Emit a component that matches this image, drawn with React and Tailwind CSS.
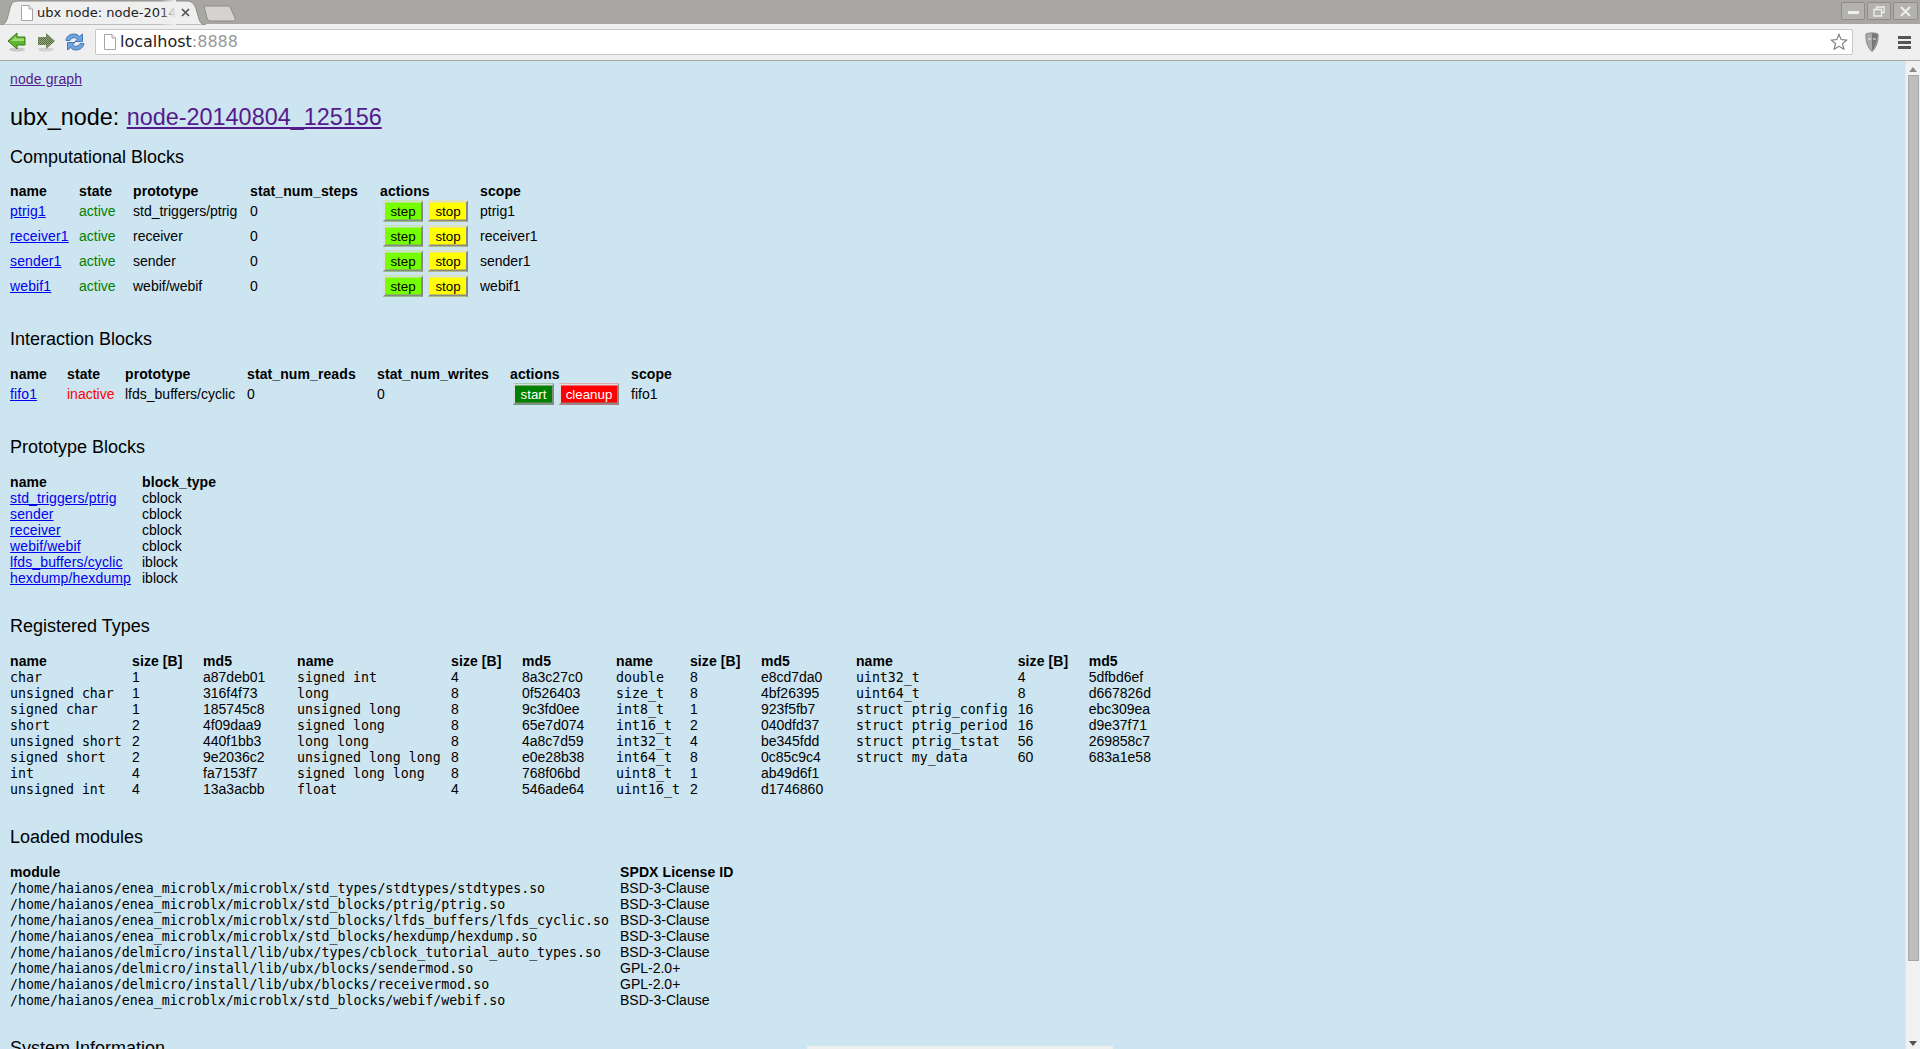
import React from "react";

const computational = [
  ["ptrig1", "std_triggers/ptrig", "0", "ptrig1"],
  ["receiver1", "receiver", "0", "receiver1"],
  ["sender1", "sender", "0", "sender1"],
  ["webif1", "webif/webif", "0", "webif1"],
];

const prototypes = [
  ["std_triggers/ptrig", "cblock"],
  ["sender", "cblock"],
  ["receiver", "cblock"],
  ["webif/webif", "cblock"],
  ["lfds_buffers/cyclic", "iblock"],
  ["hexdump/hexdump", "iblock"],
];

const typeTables = [
  {
    nameWidth: "w-[122px]",
    md5Width: "w-[74px]",
    rows: [
      ["char", "1", "a87deb01"],
      ["unsigned char", "1", "316f4f73"],
      ["signed char", "1", "185745c8"],
      ["short", "2", "4f09daa9"],
      ["unsigned short", "2", "440f1bb3"],
      ["signed short", "2", "9e2036c2"],
      ["int", "4", "fa7153f7"],
      ["unsigned int", "4", "13a3acbb"],
    ],
  },
  {
    nameWidth: "w-[154px]",
    md5Width: "w-[74px]",
    rows: [
      ["signed int", "4", "8a3c27c0"],
      ["long", "8", "0f526403"],
      ["unsigned long", "8", "9c3fd0ee"],
      ["signed long", "8", "65e7d074"],
      ["long long", "8", "4a8c7d59"],
      ["unsigned long long", "8", "e0e28b38"],
      ["signed long long", "8", "768f06bd"],
      ["float", "4", "546ade64"],
    ],
  },
  {
    nameWidth: "w-[73px]",
    md5Width: "w-[75px]",
    rows: [
      ["double", "8", "e8cd7da0"],
      ["size_t", "8", "4bf26395"],
      ["int8_t", "1", "923f5fb7"],
      ["int16_t", "2", "040dfd37"],
      ["int32_t", "4", "be345fdd"],
      ["int64_t", "8", "0c85c9c4"],
      ["uint8_t", "1", "ab49d6f1"],
      ["uint16_t", "2", "d1746860"],
    ],
  },
  {
    nameWidth: "w-[161px]",
    md5Width: "w-[74px]",
    rows: [
      ["uint32_t", "4", "5dfbd6ef"],
      ["uint64_t", "8", "d667826d"],
      ["struct ptrig_config", "16", "ebc309ea"],
      ["struct ptrig_period", "16", "d9e37f71"],
      ["struct ptrig_tstat", "56", "269858c7"],
      ["struct my_data", "60", "683a1e58"],
    ],
  },
];

const modules = [
  ["/home/haianos/enea_microblx/microblx/std_types/stdtypes/stdtypes.so", "BSD-3-Clause"],
  ["/home/haianos/enea_microblx/microblx/std_blocks/ptrig/ptrig.so", "BSD-3-Clause"],
  ["/home/haianos/enea_microblx/microblx/std_blocks/lfds_buffers/lfds_cyclic.so", "BSD-3-Clause"],
  ["/home/haianos/enea_microblx/microblx/std_blocks/hexdump/hexdump.so", "BSD-3-Clause"],
  ["/home/haianos/delmicro/install/lib/ubx/types/cblock_tutorial_auto_types.so", "BSD-3-Clause"],
  ["/home/haianos/delmicro/install/lib/ubx/blocks/sendermod.so", "GPL-2.0+"],
  ["/home/haianos/delmicro/install/lib/ubx/blocks/receivermod.so", "GPL-2.0+"],
  ["/home/haianos/enea_microblx/microblx/std_blocks/webif/webif.so", "BSD-3-Clause"],
];

const H2 = ({ children }) => (
  <h2 className="mt-[30px] mb-[16px] text-[18px] leading-[21px] font-normal text-black">{children}</h2>
);

const Th = ({ children, className = "" }) => (
  <th className={`pr-[10px] text-left font-bold tracking-[0.1px] whitespace-nowrap ${className}`}>{children}</th>
);
const Td = ({ children, className = "" }) => (
  <td className={`pr-[10px] whitespace-nowrap ${className}`}>{children}</td>
);
// cells of the rows that hold buttons: text sits 1px above the middle
const ActionTd = ({ children, className = "" }) => (
  <td className={`pr-[10px] pb-[2px] whitespace-nowrap ${className}`}>{children}</td>
);
// mono cells sit 1px lower than the sans ones
const MonoTd = ({ children }) => (
  <td className="pr-[10px] pt-[1px] whitespace-nowrap text-[13.28px] leading-[15px] font-['DejaVu_Sans_Mono',monospace]">
    {children}
  </td>
);
const Link = ({ children }) => (
  <a href="#" className="tracking-[0.13px] text-[#0000ee] underline">{children}</a>
);

const ActionButton = ({ className, children }) => (
  <button
    className={`ml-[3px] mr-[2px] h-[21px] translate-y-[0.5px] text-center text-[13.33px] leading-[15px] border-2 border-t-[#dcdcdc] border-l-[#dcdcdc] border-r-[#888888] border-b-[#888888] ${className}`}
  >
    {children}
  </button>
);

const PageIcon = () => (
  <svg width="14" height="16" viewBox="0 0 14 16">
    <path d="M1.5 0.5H9L12.5 4V15.5H1.5Z" fill="#fff" stroke="#a5a5a5" />
    <path d="M9 0.5V4H12.5" fill="#eee" stroke="#a5a5a5" />
  </svg>
);

const Tab = () => (
  <div className="relative h-[25px] w-[206px] shrink-0">
    <svg className="absolute inset-0" width="206" height="25" viewBox="0 0 206 25">
      <path d="M0 25C6 25 7 20 9 12C11 4 12 1 18 1H187C193 1 195 5 197 12C199 20 200 25 206 25Z" fill="#efefef" stroke="#8d8b87" />
    </svg>
    <div className="relative flex h-[25px] items-center pl-[20px]">
      <PageIcon />
      <span className="ml-[3px] w-[140px] overflow-hidden whitespace-nowrap text-[13px] text-[#222] font-['DejaVu_Sans',sans-serif]">
        ubx node: node-20140804
      </span>
      <span className="absolute left-[160px] top-0 h-[25px] w-[16px] bg-gradient-to-r from-transparent to-[#efefef]" />
      <svg className="ml-[4px]" width="9" height="9" viewBox="0 0 9 9">
        <path d="M1 1L8 8M8 1L1 8" stroke="#555" strokeWidth="1.7" />
      </svg>
    </div>
  </div>
);

const WindowButton = ({ width, children }) => (
  <div className={`flex h-[18px] ${width} items-center justify-center rounded-[2px] border border-[#8f8d89] bg-[#b4b2ae]`}>
    {children}
  </div>
);

const Chrome = () => (
  <div className="shrink-0">
    <div className="flex h-[24px] items-end justify-between bg-[#a9a7a3] pr-[2px] overflow-visible">
      <div className="flex items-end -mb-px">
        <Tab />
        <svg className="-ml-[3px] mb-[3px]" width="33" height="17" viewBox="0 0 33 17">
          <path d="M1 1H24C26 1 27 2 28 4L32 13C33 15 32 16 30 16H8C6 16 5 15 4 13Z" fill="#d4d3d0" stroke="#8d8b87" />
        </svg>
      </div>
      <div className="flex gap-[2px] self-start pt-[2px]">
        <WindowButton width="w-[24px]">
          <span className="mt-[3px] h-[3px] w-[11px] bg-[#eee]" />
        </WindowButton>
        <WindowButton width="w-[24px]">
          <svg width="12" height="11" viewBox="0 0 12 11">
            <path d="M3.5 3V1H11V6.5H8.5M1 3.5H8.5V10H1Z" fill="none" stroke="#eee" strokeWidth="1.3" />
          </svg>
        </WindowButton>
        <WindowButton width="w-[25px]">
          <svg width="11" height="11" viewBox="0 0 11 11">
            <path d="M1 1L10 10M10 1L1 10" stroke="#eee" strokeWidth="2" />
          </svg>
        </WindowButton>
      </div>
    </div>
    <div className="flex h-[37px] items-center border-b border-[#a8a8a8] bg-[#efefef]">
      <div className="flex w-[95px] shrink-0 items-center pl-[7px] gap-[9px]">
        <svg width="20" height="20" viewBox="0 0 20 20">
          <ellipse cx="10" cy="17.5" rx="8" ry="2" fill="#c9c9c9" />
          <path d="M1 9L10 1V5H18V13H10V17Z" fill="#62b52e" stroke="#3a7d1a" />
          <path d="M4 9L9 4.5V6.5H17V9Z" fill="#a5dc7c" />
        </svg>
        <svg width="20" height="20" viewBox="0 0 20 20">
          <defs>
            <pattern id="dither" width="2" height="2" patternUnits="userSpaceOnUse">
              <rect width="2" height="2" fill="#9aa98a" />
              <rect width="1" height="1" fill="#4f6b33" />
              <rect x="1" y="1" width="1" height="1" fill="#4f6b33" />
            </pattern>
          </defs>
          <ellipse cx="10" cy="17.5" rx="8" ry="2" fill="#d2d2d2" />
          <path d="M19 9L10 1V5H2V13H10V17Z" fill="url(#dither)" />
        </svg>
        <svg width="20" height="20" viewBox="0 0 20 20">
          <path d="M1 8C2 3 7 1 12 2.5L14.5 4.5L17.5 2V9.5H10L12.5 7C10 5 6.5 5.5 5 8.5H1Z" fill="#6ea4df" stroke="#3a6fb0" strokeWidth="0.9" />
          <path d="M19 11.5C18 17 13 19 8 17.5L5.5 15.5L2.5 18V10.5H10L7.5 13C10 15 13.5 14.5 15 11.5H19Z" fill="#6ea4df" stroke="#3a6fb0" strokeWidth="0.9" />
        </svg>
      </div>
      <div className="flex h-[26px] w-[1758px] shrink-0 items-center rounded-[2px] border border-[#c8c8c8] bg-white pl-[7px] pr-[4px]">
        <PageIcon />
        <span className="ml-[3px] text-[16px] text-[#222] font-['DejaVu_Sans',sans-serif]">
          localhost<span className="text-[#999]">:8888</span>
        </span>
        <svg className="ml-auto" width="18" height="18" viewBox="0 0 18 18">
          <path d="M9 1.5L11.2 6.6L16.7 7.1L12.5 10.7L13.8 16.2L9 13.3L4.2 16.2L5.5 10.7L1.3 7.1L6.8 6.6Z" fill="#fff" stroke="#777" strokeWidth="1.1" />
        </svg>
      </div>
      <svg className="ml-[12px]" width="14" height="20" viewBox="0 0 14 20">
        <path d="M1 2C4 0.5 10 0.5 13 2C13.5 8 12 15 7 19.5C2 15 0.5 8 1 2Z" fill="#a9a9a9" stroke="#888" />
        <path d="M7 1V19C10 15 12.5 8 12.5 2.5Z" fill="#777" />
        <path d="M3 7H6M8 7H11" stroke="#eee" />
      </svg>
      <div className="ml-[19px] flex w-[13px] flex-col gap-[2px]">
        <span className="h-[3px] bg-[#555]" />
        <span className="h-[3px] bg-[#555]" />
        <span className="h-[3px] bg-[#555]" />
      </div>
    </div>
  </div>
);

const Scrollbar = () => (
  <div className="relative flex w-[15px] shrink-0 flex-col items-center border-l border-[#e4e4e4] bg-[#f1f1f1]">
    <span className="mt-[6px] h-0 w-0 border-x-[4px] border-b-[5px] border-x-transparent border-b-[#8a8a8a]" />
    <div className="mt-[3px] h-[886px] w-[11px] border border-[#a8a8a8] bg-[#bdbdbd]" />
    <span className="absolute bottom-[3px] h-0 w-0 border-x-[4px] border-t-[5px] border-x-transparent border-t-[#505050]" />
  </div>
);

export default function App() {
  return (
    <div className="relative flex h-[1049px] w-[1920px] flex-col overflow-hidden">
      <Chrome />
      <div className="flex min-h-0 flex-1">
        <main className="min-w-0 flex-1 overflow-hidden bg-[#cde5f0] pl-[10px] pt-[10px] text-[14px] leading-[16px] text-black font-['Liberation_Sans',Arial,sans-serif]">
          <a href="#" className="tracking-[0.13px] text-[#551a8b] underline">node graph</a>
          <h1 className="mt-[16px] text-[23.4px] leading-[28px] font-normal">
            ubx_node: <a href="#" className="ml-[1px] text-[#551a8b] underline">node-20140804_125156</a>
          </h1>

          <h2 className="mt-[16px] mb-[15px] text-[18px] leading-[21px] font-normal">Computational Blocks</h2>
          <table>
            <thead>
              <tr>
                <Th className="w-[69px]">name</Th>
                <Th className="w-[54px]">state</Th>
                <Th className="w-[117px]">prototype</Th>
                <Th className="w-[130px]">stat_num_steps</Th>
                <Th className="w-[100px]">actions</Th>
                <Th>scope</Th>
              </tr>
            </thead>
            <tbody>
              {computational.map((b) => (
                <tr key={b[0]} className="h-[25px]">
                  <ActionTd><Link>{b[0]}</Link></ActionTd>
                  <ActionTd className="text-[#008000]">active</ActionTd>
                  <ActionTd>{b[1]}</ActionTd>
                  <ActionTd>{b[2]}</ActionTd>
                  <ActionTd>
                    <ActionButton className="w-[40px] bg-[#76ff00] text-black">step</ActionButton>
                    <ActionButton className="w-[40px] bg-[#ffff00] text-black">stop</ActionButton>
                  </ActionTd>
                  <ActionTd>{b[3]}</ActionTd>
                </tr>
              ))}
            </tbody>
          </table>

          <H2>Interaction Blocks</H2>
          <table>
            <thead>
              <tr>
                <Th className="w-[57px]">name</Th>
                <Th className="w-[58px]">state</Th>
                <Th className="w-[122px]">prototype</Th>
                <Th className="w-[130px]">stat_num_reads</Th>
                <Th className="w-[133px]">stat_num_writes</Th>
                <Th className="w-[121px]">actions</Th>
                <Th>scope</Th>
              </tr>
            </thead>
            <tbody>
              <tr className="h-[25px]">
                <ActionTd><Link>fifo1</Link></ActionTd>
                <ActionTd className="text-[#ff0000]">inactive</ActionTd>
                <ActionTd>lfds_buffers/cyclic</ActionTd>
                <ActionTd>0</ActionTd>
                <ActionTd>0</ActionTd>
                <ActionTd>
                  <ActionButton className="w-[41px] bg-[#008000] text-white">start</ActionButton>
                  <ActionButton className="w-[60px] bg-[#ff0000] text-white">cleanup</ActionButton>
                </ActionTd>
                <ActionTd>fifo1</ActionTd>
              </tr>
            </tbody>
          </table>

          <H2>Prototype Blocks</H2>
          <table>
            <thead>
              <tr>
                <Th className="w-[132px]">name</Th>
                <Th>block_type</Th>
              </tr>
            </thead>
            <tbody>
              {prototypes.map((p) => (
                <tr key={p[0]}>
                  <Td><Link>{p[0]}</Link></Td>
                  <Td>{p[1]}</Td>
                </tr>
              ))}
            </tbody>
          </table>

          <H2>Registered Types</H2>
          <div className="flex items-start gap-[20px]">
            {typeTables.map((t, i) => (
              <table key={i}>
                <thead>
                  <tr>
                    <Th className={t.nameWidth}>name</Th>
                    <Th className="w-[71px]">size [B]</Th>
                    <Th className={t.md5Width}>md5</Th>
                  </tr>
                </thead>
                <tbody>
                  {t.rows.map((r) => (
                    <tr key={r[0]}>
                      <MonoTd>{r[0]}</MonoTd>
                      <Td>{r[1]}</Td>
                      <Td>{r[2]}</Td>
                    </tr>
                  ))}
                </tbody>
              </table>
            ))}
          </div>

          <H2>Loaded modules</H2>
          <table>
            <thead>
              <tr>
                <Th className="w-[610px]">module</Th>
                <Th>SPDX License ID</Th>
              </tr>
            </thead>
            <tbody>
              {modules.map((m) => (
                <tr key={m[0]}>
                  <MonoTd>{m[0]}</MonoTd>
                  <Td>{m[1]}</Td>
                </tr>
              ))}
            </tbody>
          </table>

          <H2>System Information</H2>
        </main>
        <Scrollbar />
      </div>
      <div className="absolute bottom-0 left-[807px] h-[3px] w-[306px] bg-[#eeeeee]" />
    </div>
  );
}
